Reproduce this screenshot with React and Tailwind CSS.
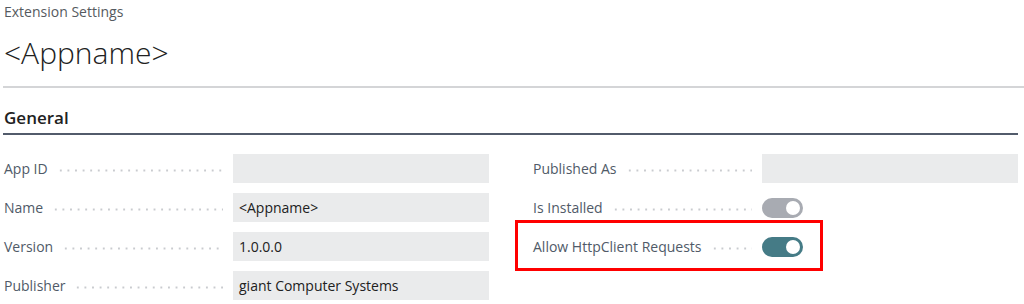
const LEFT = [
  { label: 'App ID', value: '' },
  { label: 'Name', value: '<Appname>' },
  { label: 'Version', value: '1.0.0.0' },
  { label: 'Publisher', value: 'giant Computer Systems' },
]

function Leader() {
  return (
    <span className="flex-1 h-[3px] mt-[3px] ml-[9px] bg-[radial-gradient(circle,#c9cbcf_0.9px,transparent_1.3px)] bg-[length:7.6px_3px] bg-repeat-x" />
  )
}

function Field({ label, children }) {
  return (
    <div className="grid grid-cols-[1fr_256px] gap-x-[10px] h-[29px] items-center">
      <div className="flex items-center min-w-0">
        <span className="pl-[1px] text-[14px] text-[#505a68] whitespace-nowrap">{label}</span>
        <Leader />
      </div>
      {children}
    </div>
  )
}

function Box({ value }) {
  return (
    <div className="h-[29px] bg-[#eaebec] px-[6px] flex items-center text-[14px] text-[#212121]">
      {value}
    </div>
  )
}

function Toggle({ on }) {
  return (
    <div className="flex items-center h-[29px]">
      <div
        className={
          'w-[41px] h-[20px] rounded-full flex items-center justify-end pr-[3px] ' +
          (on ? 'bg-[#457b86]' : 'bg-[#a8abb2]')
        }
      >
        <div className="w-[14px] h-[14px] rounded-full bg-white" />
      </div>
    </div>
  )
}

export default function App() {
  return (
    <div className="w-[1024px] h-[304px] bg-white overflow-hidden pl-[3px] pr-[6px] font-['Segoe_UI','Open_Sans',sans-serif]">
      <div className="pt-[2px] pl-[1px] text-[14px] leading-[20px] text-[#555a60]">Extension Settings</div>
      <div className="pl-[1px] mt-[13px] text-[30px] leading-[36px] font-light text-[#212121]">&lt;Appname&gt;</div>
      <div className="mt-[15px] h-[2px] bg-[#d4d5d7] -mr-[6px]" />
      <div className="mt-[18px] pl-[1px] text-[17px] leading-[24px] font-semibold text-[#212121]">General</div>
      <div className="mt-[3px] h-[2px] bg-[#525b6b]" />

      <div className="mt-[19px] grid grid-cols-2 gap-x-[43px]">
        <div className="flex flex-col gap-y-[10px]">
          {LEFT.map((f) => (
            <Field key={f.label} label={f.label}>
              <Box value={f.value} />
            </Field>
          ))}
        </div>
        <div className="flex flex-col gap-y-[10px]">
          <Field label="Published As">
            <Box value="" />
          </Field>
          <Field label="Is Installed">
            <Toggle on={false} />
          </Field>
          <div className="relative">
            <Field label="Allow HttpClient Requests">
              <Toggle on />
            </Field>
            <div className="absolute -left-[17px] -top-[12px] w-[308px] h-[51px] border-[3px] border-[#ff0000] pointer-events-none" />
          </div>
        </div>
      </div>
    </div>
  )
}
